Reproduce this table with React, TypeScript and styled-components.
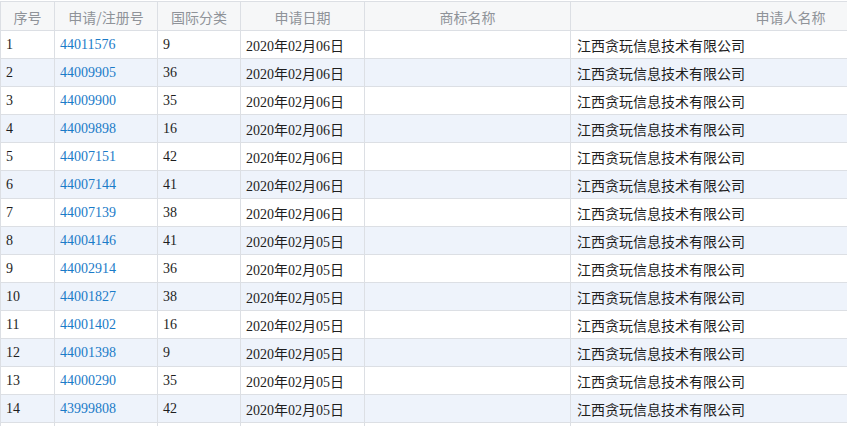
import React from "react";
import styled, { createGlobalStyle } from "styled-components";

const Global = createGlobalStyle`
  html, body { margin: 0; padding: 0; background: #fff; overflow: hidden; }
  * { box-sizing: border-box; }
`;

const COLS = "54px 103px 83px 124px 206px 440px";

const Viewport = styled.div`
  width: 847px;
  height: 426px;
  overflow: hidden;
`;

const Table = styled.div`
  margin-top: 1px;
  width: 1011px;
  border-left: 1px solid #dcdfe4;
  border-top: 1px solid #dcdfe4;
  font-family: "Liberation Serif", "Noto Sans CJK SC", serif;
  font-size: 14px;
  color: #1e1e1e;
`;

const Row = styled.div<{ $alt?: boolean; $head?: boolean }>`
  display: grid;
  grid-template-columns: ${COLS};
  height: ${(p) => (p.$head ? "29px" : "28px")};
  background: ${(p) => (p.$head ? "#f6f7f8" : p.$alt ? "#eef3fb" : "#fff")};
`;

const Cell = styled.div`
  border-right: 1px solid #dcdfe4;
  border-bottom: 1px solid #dcdfe4;
  display: flex;
  align-items: center;
  padding: 0 5px;
  white-space: nowrap;
  overflow: hidden;
`;

const HeadCell = styled(Cell)`
  color: #8f9399;
  font-family: "Noto Sans CJK SC", sans-serif;
  font-size: 14px;
  justify-content: center;
  padding-top: 1px;
`;

const Link = styled.a`
  color: #1b7bc8;
  text-decoration: none;
`;

const Company = styled.span`
  font-family: "Noto Sans CJK SC", sans-serif;
  font-size: 14px;
  padding-left: 1px;
`;

const rows: [string, string, string][] = [
  ["44011576", "9", "06"],
  ["44009905", "36", "06"],
  ["44009900", "35", "06"],
  ["44009898", "16", "06"],
  ["44007151", "42", "06"],
  ["44007144", "41", "06"],
  ["44007139", "38", "06"],
  ["44004146", "41", "05"],
  ["44002914", "36", "05"],
  ["44001827", "38", "05"],
  ["44001402", "16", "05"],
  ["44001398", "9", "05"],
  ["44000290", "35", "05"],
  ["43999808", "42", "05"],
];

export default function App() {
  return (
    <>
      <Global />
      <Viewport>
        <Table>
          <Row $head>
            <HeadCell>序号</HeadCell>
            <HeadCell>申请/注册号</HeadCell>
            <HeadCell>国际分类</HeadCell>
            <HeadCell>申请日期</HeadCell>
            <HeadCell>商标名称</HeadCell>
            <HeadCell>申请人名称</HeadCell>
          </Row>
          {rows.map(([no, cls, day], i) => (
            <Row key={no} $alt={i % 2 === 1}>
              <Cell>{i + 1}</Cell>
              <Cell>
                <Link href="#">{no}</Link>
              </Cell>
              <Cell>{cls}</Cell>
              <Cell>2020年02月{day}日</Cell>
              <Cell />
              <Cell>
                <Company>江西贪玩信息技术有限公司</Company>
              </Cell>
            </Row>
          ))}
          <Row>
            <Cell />
            <Cell />
            <Cell />
            <Cell />
            <Cell />
            <Cell />
          </Row>
        </Table>
      </Viewport>
    </>
  );
}
